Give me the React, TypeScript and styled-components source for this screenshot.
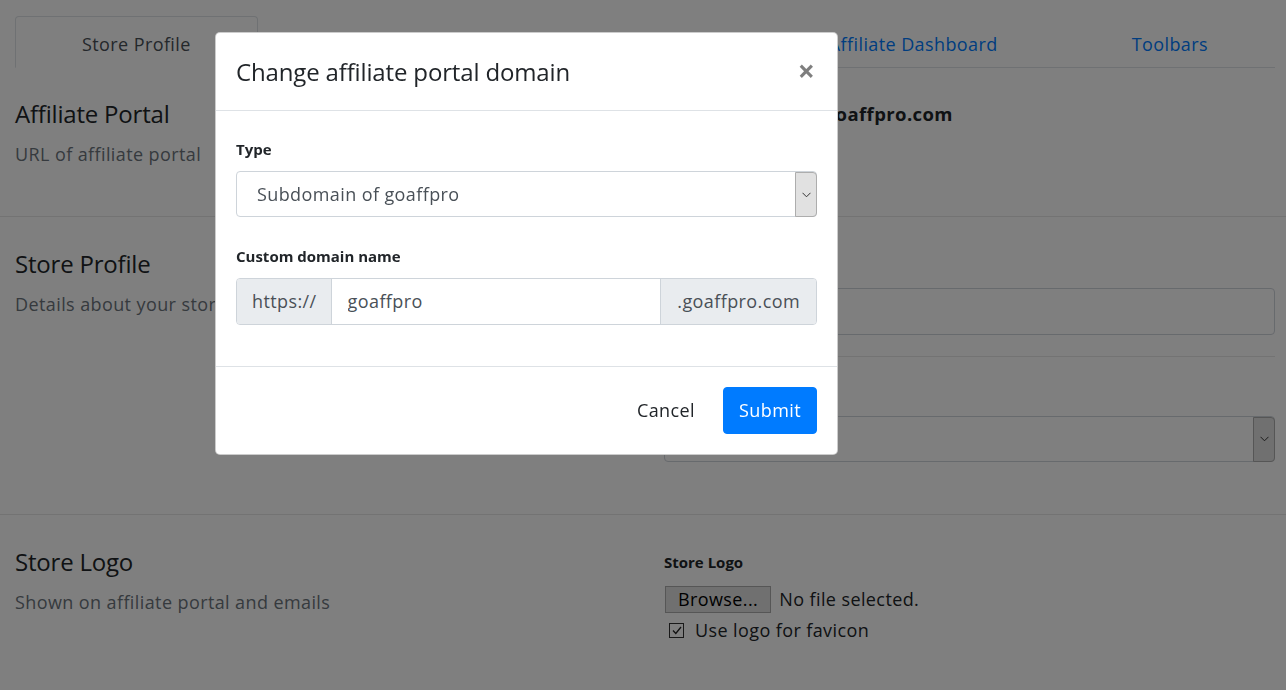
import styled, { createGlobalStyle } from "styled-components";

const GlobalStyle = createGlobalStyle`
  body {
    margin: 0;
    background: #fff;
    color: #212529;
    font-family: "Open Sans", "Noto Sans", sans-serif;
    font-size: 18px;
    line-height: 1.5;
    letter-spacing: 0.4px;
  }
  * { box-sizing: border-box; }
`;

const Page = styled.div`
  padding-top: 16px;
`;

const TabBar = styled.nav`
  display: flex;
  margin: 0 11px 0 15px;
  border-bottom: 1px solid #dee2e6;
`;

const Tab = styled.a<{ $active?: boolean }>`
  flex: 1 1 auto;
  text-align: center;
  padding: 14px 16px 9px;
  margin-bottom: -1px;
  border: 1px solid transparent;
  border-radius: 4px 4px 0 0;
  color: ${(p) => (p.$active ? "#495057" : "#007bff")};
  ${(p) => p.$active && "background: #fff; border-color: #dee2e6 #dee2e6 #fff;"}
  text-decoration: none;
  white-space: nowrap;
`;

const Section = styled.section<{ $pt: number; $pb: number; $last?: boolean }>`
  display: grid;
  grid-template-columns: 649px 1fr;
  padding: ${(p) => p.$pt}px 11px ${(p) => p.$pb}px 15px;
  border-bottom: ${(p) => (p.$last ? "none" : "1px solid #e6e6e6")};
`;

const SectionTitle = styled.h4`
  margin: 0 0 12px;
  font-size: 24px;
  font-weight: 400;
  line-height: 1.2;
  letter-spacing: -0.2px;
`;

const SectionText = styled.p`
  margin: 0;
  color: #6c757d;
`;

const Column = styled.div`
  display: flex;
  flex-direction: column;
`;

const PortalUrl = styled.div`
  font-size: 18.5px;
  font-weight: 700;
  line-height: 27px;
`;

const LinkButton = styled.button`
  align-self: flex-start;
  margin-top: 8px;
  padding: 0;
  border: none;
  background: none;
  font: inherit;
  letter-spacing: inherit;
  color: #007bff;
`;

const Label = styled.label<{ $mt?: number; $mb?: number }>`
  display: block;
  margin: ${(p) => p.$mt ?? 0}px 0 ${(p) => p.$mb ?? 11}px;
  font-size: 15px;
  font-weight: 700;
  line-height: 22px;
  letter-spacing: 0;
`;

const FieldSpacer = styled.div`
  height: 27px;
  margin-bottom: 11px;
`;

const TextInput = styled.input`
  width: 100%;
  height: 47px;
  padding: 9px 16px;
  border: 1px solid #ced4da;
  border-radius: 4px;
  font: inherit;
  color: #495057;
  background: #fff;
`;

const Divider = styled.hr`
  margin: 21px 0 21px;
  border: 0;
  border-top: 1px solid #e6e6e6;
`;

const SelectBox = styled.div`
  display: flex;
  align-items: stretch;
  height: 46px;
  border: 1px solid #ced4da;
  border-radius: 4px;
  background: #fff;
  color: #495057;
`;

const SelectValue = styled.span`
  flex: 1;
  display: flex;
  align-items: center;
  padding-left: 20px;
`;

const ArrowBox = styled.span`
  display: flex;
  align-items: center;
  justify-content: center;
  width: 22px;
  margin: 0 -1px -1px 0;
  background: #e1e1e1;
  border: 1px solid #adadad;
  border-radius: 0 4px 4px 0;
`;

const FileRow = styled.div`
  display: flex;
  align-items: center;
  height: 27px;
  margin-bottom: 4px;
  margin-left: 1px;
`;

const BrowseButton = styled.button`
  height: 27px;
  padding: 0 12px;
  border: 1px solid #adadad;
  background: #e1e1e1;
  font: inherit;
  letter-spacing: inherit;
  line-height: 1;
  color: #000;
`;

const FileText = styled.span`
  margin-left: 8px;
`;

const CheckRow = styled.label`
  display: flex;
  align-items: center;
  gap: 11px;
  padding-left: 5px;
`;

const CheckBox = styled.span`
  display: flex;
  align-items: center;
  justify-content: center;
  width: 15px;
  height: 15px;
  border: 1px solid #333;
  background: #fff;
`;

const Backdrop = styled.div`
  position: fixed;
  inset: 0;
  padding: 32px 0 0 215px;
  background: rgba(0, 0, 0, 0.5);
`;

const Dialog = styled.div`
  width: 623px;
  background: #fff;
  border: 1px solid rgba(0, 0, 0, 0.2);
  border-radius: 5px;
`;

const DialogHeader = styled.header`
  display: flex;
  align-items: center;
  justify-content: space-between;
  padding: 21px 20px 20px;
  border-bottom: 1px solid #dee2e6;
`;

const DialogTitle = styled.h5`
  margin: 0;
  font-size: 24px;
  font-weight: 400;
  line-height: 36px;
  letter-spacing: -0.15px;
`;

const CloseButton = styled.button`
  margin: 0 2px 2px 0;
  padding: 0;
  border: none;
  background: none;
  font: 700 30px/1 "Open Sans", sans-serif;
  color: #000;
  opacity: 0.5;
`;

const DialogBody = styled.div`
  padding: 27px 20px 13px;
`;

const FormGroup = styled.div`
  margin-bottom: 28px;
`;

const InputGroup = styled.div`
  display: flex;
  height: 47px;
  border: 1px solid #ced4da;
  border-radius: 4px;
  overflow: hidden;
  color: #495057;
`;

const Addon = styled.span<{ $side: "left" | "right" }>`
  display: flex;
  align-items: center;
  padding: 0 ${(p) => (p.$side === "left" ? "14px 0 15px" : "16px")};
  background: #e9ecef;
  ${(p) => (p.$side === "left" ? "border-right" : "border-left")}: 1px solid #ced4da;
`;

const GroupInput = styled.input`
  flex: 1;
  min-width: 0;
  padding: 0 16px;
  border: none;
  font: inherit;
  letter-spacing: inherit;
  color: #495057;
`;

const DialogFooter = styled.footer`
  display: flex;
  justify-content: flex-end;
  gap: 12px;
  padding: 20px;
  border-top: 1px solid #dee2e6;
`;

const Button = styled.button<{ $primary?: boolean }>`
  height: 47px;
  padding: 0 15px;
  border: 1px solid ${(p) => (p.$primary ? "#007bff" : "transparent")};
  border-radius: 4px;
  background: ${(p) => (p.$primary ? "#007bff" : "transparent")};
  color: ${(p) => (p.$primary ? "#fff" : "#212529")};
  font: inherit;
  letter-spacing: inherit;
`;

function Chevron() {
  return (
    <svg width="9" height="6" viewBox="0 0 9 6">
      <path d="M0.5 0.8 L4.5 4.8 L8.5 0.8" fill="none" stroke="#333" strokeWidth="1" />
    </svg>
  );
}

export default function App() {
  return (
    <>
      <GlobalStyle />
      <Page>
        <TabBar>
          <Tab $active>Store Profile</Tab>
          <Tab href="#">Affiliate Portal</Tab>
          <Tab href="#">Notifications</Tab>
          <Tab href="#">Affiliate Dashboard</Tab>
          <Tab href="#">Toolbars</Tab>
        </TabBar>

        <Section $pt={32} $pb={48}>
          <div>
            <SectionTitle>Affiliate Portal</SectionTitle>
            <SectionText>URL of affiliate portal</SectionText>
          </div>
          <Column>
            <PortalUrl>https://goaffpro.goaffpro.com</PortalUrl>
            <LinkButton>Change</LinkButton>
          </Column>
        </Section>

        <Section $pt={33} $pb={52}>
          <div>
            <SectionTitle>Store Profile</SectionTitle>
            <SectionText>Details about your store</SectionText>
          </div>
          <Column>
            <FieldSpacer />
            <TextInput defaultValue="" />
            <Divider />
            <FieldSpacer />
            <SelectBox>
              <SelectValue />
              <ArrowBox>
                <Chevron />
              </ArrowBox>
            </SelectBox>
          </Column>
        </Section>

        <Section $pt={33} $pb={60} $last>
          <div>
            <SectionTitle>Store Logo</SectionTitle>
            <SectionText>Shown on affiliate portal and emails</SectionText>
          </div>
          <Column>
            <Label $mt={3} $mb={13}>Store Logo</Label>
            <FileRow>
              <BrowseButton>Browse...</BrowseButton>
              <FileText>No file selected.</FileText>
            </FileRow>
            <CheckRow>
              <CheckBox>
                <svg width="10" height="9" viewBox="0 0 10 9">
                  <path d="M1 4.5 L3.8 7.5 L9 1" fill="none" stroke="#222" strokeWidth="1.3" />
                </svg>
              </CheckBox>
              Use logo for favicon
            </CheckRow>
          </Column>
        </Section>
      </Page>

      <Backdrop>
        <Dialog>
          <DialogHeader>
            <DialogTitle>Change affiliate portal domain</DialogTitle>
            <CloseButton>×</CloseButton>
          </DialogHeader>
          <DialogBody>
            <FormGroup>
              <Label>Type</Label>
              <SelectBox>
                <SelectValue>Subdomain of goaffpro</SelectValue>
                <ArrowBox>
                  <Chevron />
                </ArrowBox>
              </SelectBox>
            </FormGroup>
            <FormGroup>
              <Label>Custom domain name</Label>
              <InputGroup>
                <Addon $side="left">https://</Addon>
                <GroupInput defaultValue="goaffpro" />
                <Addon $side="right">.goaffpro.com</Addon>
              </InputGroup>
            </FormGroup>
          </DialogBody>
          <DialogFooter>
            <Button>Cancel</Button>
            <Button $primary>Submit</Button>
          </DialogFooter>
        </Dialog>
      </Backdrop>
    </>
  );
}
